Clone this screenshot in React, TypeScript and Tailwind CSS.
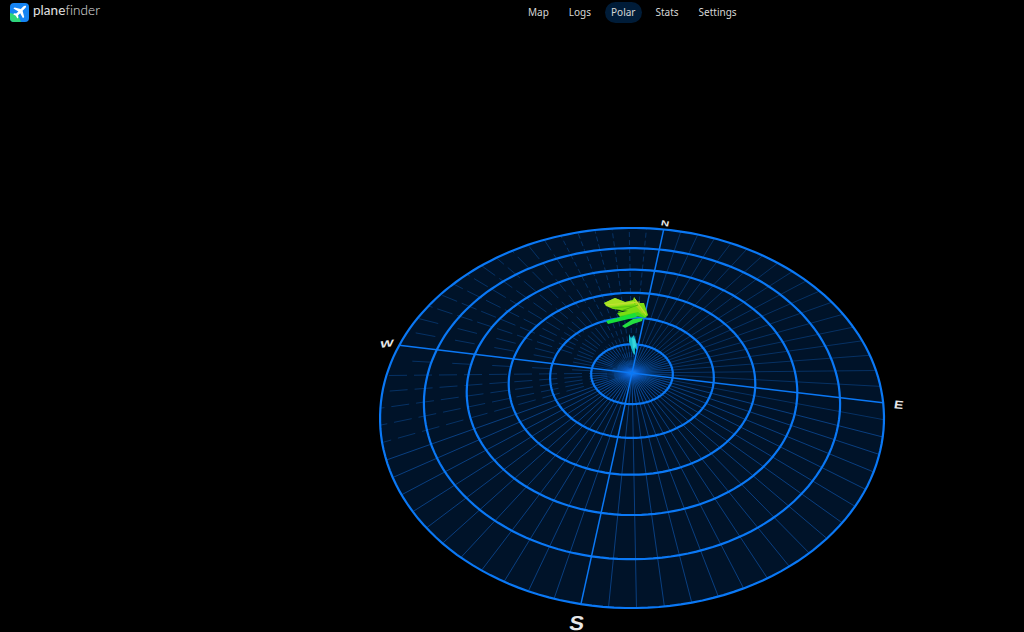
const CX = 632;
const CY = 373;
const A = 40.8;
const B = 29.9;
const K = 0.03946;
const TILT = (9.2 * Math.PI) / 180;

// flat polar plane -> screen, r in ring units, bearing in radians
const project = (r: number, bearing: number): [number, number] => {
  const a = bearing + TILT;
  const x = r * Math.sin(a);
  const y = r * Math.cos(a);
  const w = 1 + K * y;
  return [CX + (A * x) / w, CY - (B * y) / w];
};

const ringPath = (r: number) => {
  const pts: string[] = [];
  for (let i = 0; i < 180; i++) {
    const [x, y] = project(r, (i * Math.PI) / 90);
    pts.push(`${x.toFixed(1)},${y.toFixed(1)}`);
  }
  return `M${pts.join("L")}Z`;
};

const spokes = Array.from({ length: 72 }, (_, i) => i * 5).filter((d) => d % 90 !== 0);

const spokeDash = (deg: number) => {
  if (deg >= 262 && deg <= 282) return "20 20";
  if (deg > 282 && deg < 330) return "16 5";
  if (deg >= 240 && deg < 262) return "18 7";
  if (deg >= 330 && deg < 360) return "5 3";
  return undefined;
};

const shapes: { points: string; fill: string }[] = [
  { points: "617,313 638,309 648,315 645,318 636,316 620,317", fill: "#3fd81c" },
  {
    points: "604,303 615,298 625,302 633,300 634,297 638,303 644,303 648,315 645,317 638,312 620,316 618,313 628,311 613,309 606,306",
    fill: "#7cdc12",
  },
  { points: "604,303 615,298 625,302 634,301 634,304 609,307", fill: "#a8e222" },
  { points: "634,297 638,303 647,314 642,313 636,306", fill: "#a6d820" },
  { points: "606,321 635,313 637,317 608,324", fill: "#17e03a" },
  { points: "622,326 633,319 643,318 642,321 633,324 625,328", fill: "#24e040" },
  { points: "629,334 631,338 634,335 637,345 637,350 635,348 635,355 633,353 631,347 629,342", fill: "#18bccb" },
  { points: "632,338 635,339 636,346 633,349", fill: "#38d6dc" },
];

const streaks = [
  { x1: 606, y1: 305, x2: 640, y2: 302, stroke: "#c4e034" },
  { x1: 618, y1: 312, x2: 638, y2: 305, stroke: "#4db40e" },
  { x1: 635, y1: 299, x2: 646, y2: 315, stroke: "#c8dc30" },
  { x1: 612, y1: 308, x2: 634, y2: 306, stroke: "#5cc410" },
];

const labels = [
  { text: "N", bearing: 0, r: 6.33, size: 11, sx: 1.05, sy: 0.68, skew: 0, rot: 12 },
  { text: "E", bearing: 90, r: 6.36, size: 14, sx: 1, sy: 0.82, skew: -4, rot: 5 },
  { text: "W", bearing: 270, r: 6.33, size: 13, sx: 1.1, sy: 0.72, skew: -16, rot: -8 },
  { text: "S", bearing: 180, r: 6.36, size: 22, sx: 1, sy: 0.92, skew: -8, rot: 0 },
];

const navItems = ["Map", "Logs", "Polar", "Stats", "Settings"];

function Logo() {
  return (
    <div className="flex items-center gap-[4px]">
      <svg width="19" height="19" viewBox="0 0 19 19">
        <rect width="19" height="19" rx="4" fill="#1583f2" />
        <path d="M0 10 L8 12 L11 19 L4 19 Q0 19 0 15 Z" fill="#2fd67a" />
        <path
          d="M16 3 C15 2.4 13.8 3 13 3.8 L10.8 6 L4.6 4.4 L3.4 5.6 L8.4 8.4 L6.2 10.6 L4.2 10.2 L3.2 11.2 L5.8 12.8 L7.4 15.4 L8.4 14.4 L8 12.4 L10.2 10.2 L13 15.2 L14.2 14 L12.6 7.8 L14.8 5.6 C15.6 4.8 16.4 3.8 16 3 Z"
          fill="#fff"
        />
      </svg>
      <span className="font-['Lato',sans-serif] -translate-y-[2px] text-[13.5px] leading-none tracking-[0.05px] text-[#e2e2e2]">
        <span className="font-normal">plane</span>
        <span className="font-light">finder</span>
      </span>
    </div>
  );
}

export default function App() {
  return (
    <div className="flex h-[632px] w-full flex-col overflow-hidden bg-black">
      <header className="flex h-[24px] shrink-0 items-start pl-[10px] pt-[3px]">
        <Logo />
        <div className="w-[421.5px] shrink-0" />
        <nav className="flex -translate-y-px items-center gap-[7px] font-['Noto_Sans',sans-serif] text-[10px] text-[#d6d6d6]">
          {navItems.map((item) => (
            <a
              key={item}
              href="#"
              className={
                item === "Polar"
                  ? "flex h-[21px] items-center rounded-full bg-[#001c38] px-[6.5px]"
                  : "flex h-[21px] items-center rounded-full px-[6.5px]"
              }
            >
              {item}
            </a>
          ))}
        </nav>
      </header>
      <main className="min-h-0 flex-1">
        <svg width="1024" height="608" viewBox="0 24 1024 608" className="block">
          <defs>
            <radialGradient id="glow">
              <stop offset="0%" stopColor="#1c86ff" stopOpacity="1" />
              <stop offset="25%" stopColor="#0a5fd0" stopOpacity="0.65" />
              <stop offset="60%" stopColor="#06407f" stopOpacity="0.3" />
              <stop offset="100%" stopColor="#041f44" stopOpacity="0" />
            </radialGradient>
          </defs>
          <path d={ringPath(6)} fill="#001329" />
          {spokes.map((deg) => {
            const [x, y] = project(6, (deg * Math.PI) / 180);
            return (
              <line
                key={deg}
                x1={CX}
                y1={CY}
                x2={x}
                y2={y}
                stroke="#0b4a96"
                strokeWidth="1"
                strokeOpacity={deg > 95 && deg < 240 ? 0.8 : 0.55}
                strokeDasharray={spokeDash(deg)}
              />
            );
          })}
          {/* the fan inside the first ring reads brighter */}
          {spokes.map((deg) => {
            const [x, y] = project(1, (deg * Math.PI) / 180);
            return <line key={deg} x1={CX} y1={CY} x2={x} y2={y} stroke="#0d5cc0" strokeWidth="0.8" strokeOpacity="0.4" />;
          })}
          <ellipse cx={CX} cy={CY} rx="34" ry="20" fill="url(#glow)" />
          {[0, 90].map((deg) => {
            const [x1, y1] = project(6, (deg * Math.PI) / 180);
            const [x2, y2] = project(6, ((deg + 180) * Math.PI) / 180);
            return <line key={deg} x1={x1} y1={y1} x2={x2} y2={y2} stroke="#0a78f5" strokeWidth="1.5" />;
          })}
          {[1, 2, 3, 4, 5, 6].map((r) => (
            <path key={r} d={ringPath(r)} fill="none" stroke="#0a78f5" strokeWidth="2.2" />
          ))}
          {shapes.map((s) => (
            <polygon key={s.points} points={s.points} fill={s.fill} />
          ))}
          {streaks.map((s) => (
            <line key={s.stroke} x1={s.x1} y1={s.y1} x2={s.x2} y2={s.y2} stroke={s.stroke} strokeWidth="1" />
          ))}
          {labels.map((l) => {
            const [x, y] = project(l.r, (l.bearing * Math.PI) / 180);
            return (
              <text
                key={l.text}
                transform={`translate(${x} ${y}) rotate(${l.rot}) skewX(${l.skew}) scale(${l.sx} ${l.sy})`}
                textAnchor="middle"
                dominantBaseline="central"
                fontFamily="'Liberation Sans', sans-serif"
                fontWeight="700"
                fontSize={l.size}
                fill="#e8e8e8"
              >
                {l.text}
              </text>
            );
          })}
        </svg>
      </main>
    </div>
  );
}
